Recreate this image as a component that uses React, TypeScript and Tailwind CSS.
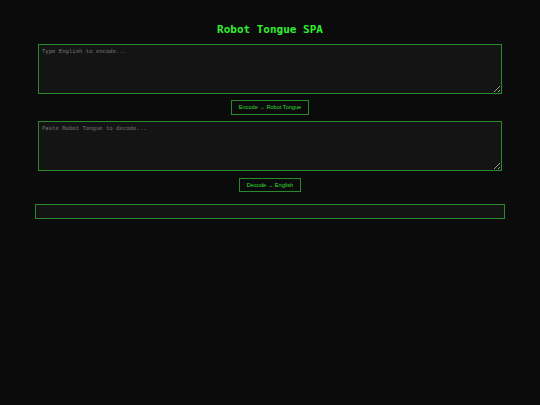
import React from "react";

export default function App() {
  return (
    <div className="min-h-[405px] w-full bg-[#0b0b0b] pt-[23px]">
      <div className="mx-auto flex w-[469px] flex-col items-center">
        <h1 className="text-[11px] font-bold leading-[14px] text-[#33ee33] [font-family:'DejaVu_Sans_Mono',monospace]">
          Robot Tongue SPA
        </h1>
        <textarea
          placeholder="Type English to encode..."
          className="mt-[7px] block h-[50px] w-[464px] border border-[#2a8a2a] bg-[#141414] px-[3px] py-[2px] text-[5.6px] leading-[8px] text-[#cccccc] outline-none placeholder:text-[#777777] [font-family:'DejaVu_Sans_Mono',monospace]"
        />
        <button className="mt-[6px] h-[15px] border border-[#2a8a2a] bg-transparent px-[7px] text-[5.6px] leading-[13px] text-[#33dd33] [font-family:'Liberation_Sans',Arial,sans-serif]">
          Encode → Robot Tongue
        </button>
        <textarea
          placeholder="Paste Robot Tongue to decode..."
          className="mt-[6px] block h-[50px] w-[464px] border border-[#2a8a2a] bg-[#141414] px-[3px] py-[2px] text-[5.6px] leading-[8px] text-[#cccccc] outline-none placeholder:text-[#777777] [font-family:'DejaVu_Sans_Mono',monospace]"
        />
        <button className="mt-[7px] h-[14px] border border-[#2a8a2a] bg-transparent px-[7px] text-[5.6px] leading-[12px] text-[#33dd33] [font-family:'Liberation_Sans',Arial,sans-serif]">
          Decode → English
        </button>
        <div className="mt-[12px] h-[15px] w-[470px] border border-[#2a8a2a] bg-[#141414]" />
      </div>
    </div>
  );
}
